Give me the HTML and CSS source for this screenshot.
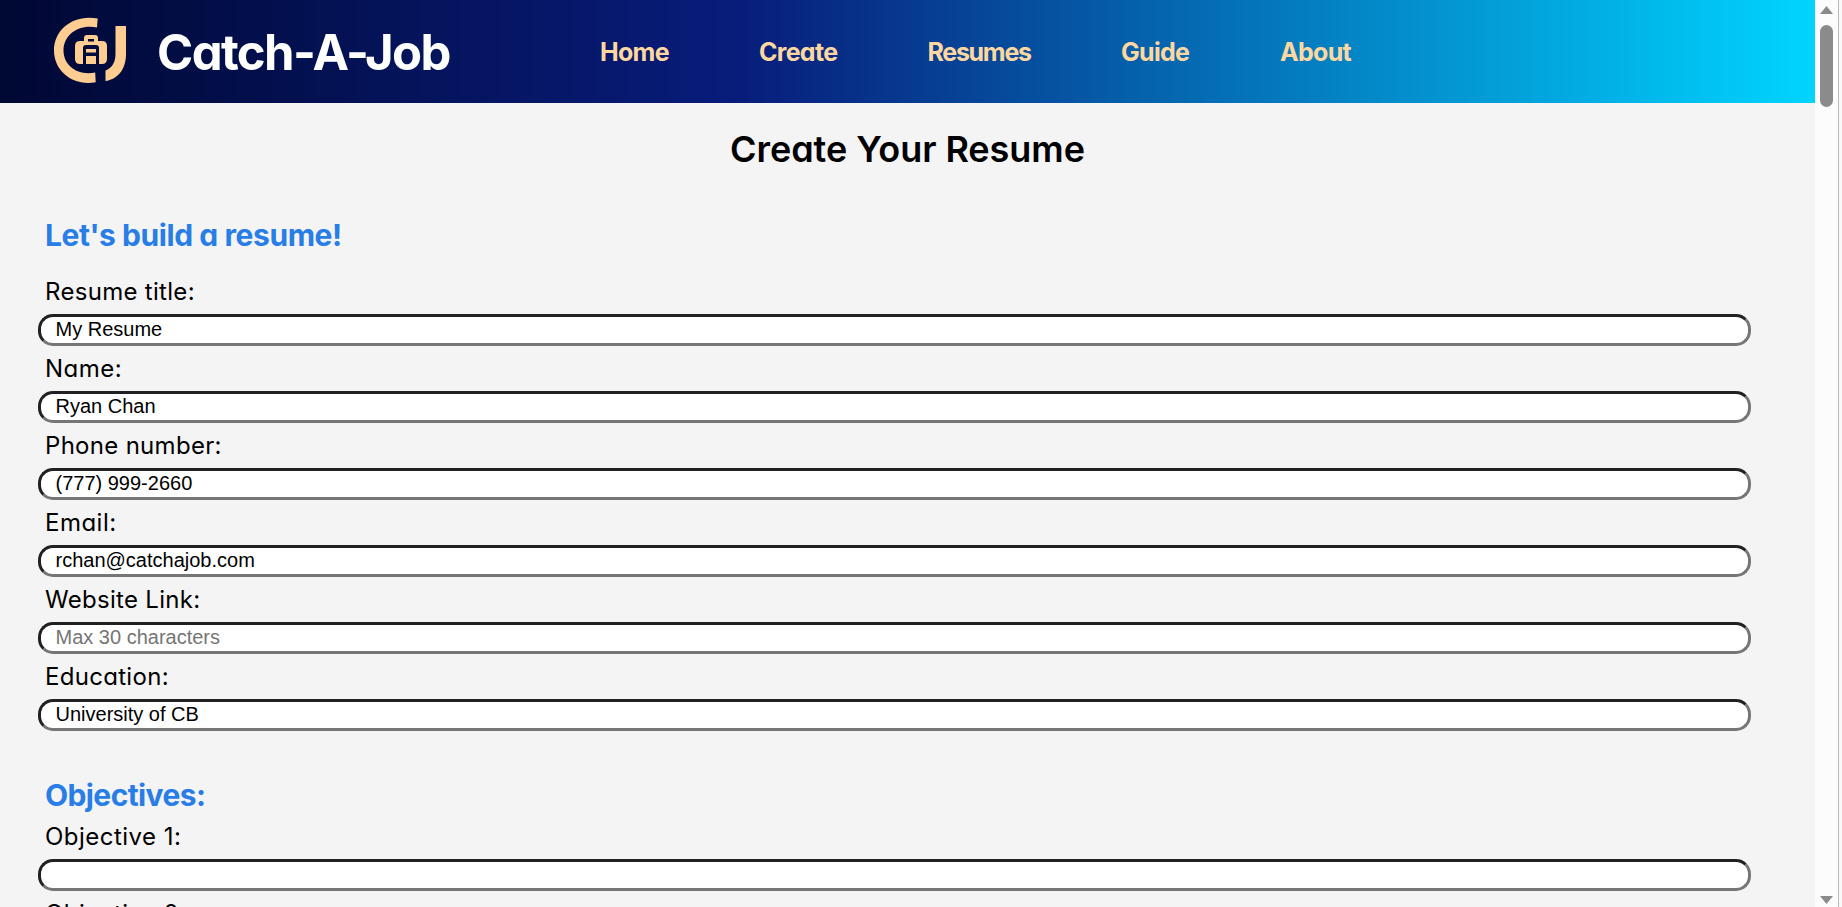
FILE: index.html
```html
<!DOCTYPE html>
<html lang="en">
<head>
<meta charset="utf-8">
<title>Catch-A-Job</title>
<link rel="stylesheet" href="styles.css">
</head>
<body>
<div class="page">
<header class="navbar">
<svg class="logo" viewBox="0 0 72 68" width="72" height="68"><g fill="#ffcc92"><path d="M43.700 1.600C20-3 0 12 0 33.500C0 55 20 69.500 41.700 65.200L41.200 55.500C24 59 9.500 49 9.500 33.500C9.500 18 24 7 43 10.500Z"/><path d="M61.500 9H72V37C72 53 63 62.500 51.500 64V53.500C58 51 61.500 45.500 61.500 37Z"/><path fill-rule="evenodd" d="M33 18H41Q44 18 44 21V24H48Q53 24 53 29V42Q53 47 48 47H45V31Q45 28 42 28H32Q29 28 29 31V47H26Q21 47 21 42V29Q21 24 26 24H30V21Q30 18 33 18ZM34 22V24.500H40V22Z"/><path d="M32 32H42V35.500H32ZM32 39H42V47H32Z"/></g></svg>
<span class="brand">Catch-A-Job</span>
<nav class="links"><a>Home</a><a>Create</a><a class="tight">Resumes</a><a>Guide</a><a>About</a></nav>
</header>
<main>
<h1>Create Your Resume</h1>
<h2>Let's build a resume!</h2>
<label>Resume title:</label><input value="My Resume">
<label class="wide">Name:</label><input value="Ryan Chan">
<label>Phone number:</label><input value="(777) 999-2660">
<label class="wide">Email:</label><input value="rchan@catchajob.com">
<label>Website Link:</label><input placeholder="Max 30 characters">
<label>Education:</label><input value="University of CB">
<h2 class="section">Objectives:</h2>
<label class="wide">Objective 1:</label><input>
<label class="wide">Objective 2:</label><input>
</main>
</div>
<aside class="scrollbar">
<svg width="13" height="8" viewBox="0 0 13 8"><path fill="#8b8b8b" d="M6.500 0L13 8H0Z"/></svg>
<div class="thumb"></div>
<svg class="down" width="13" height="8" viewBox="0 0 13 8"><path fill="#8b8b8b" d="M0 0H13L6.500 8Z"/></svg>
</aside>
<div class="edge"></div>
</body>
</html>
```
FILE: styles.css
```css
* { box-sizing: border-box; }
body {
  margin: 0;
  height: 907px;
  overflow: hidden;
  display: flex;
  background: #f4f4f4;
  font-family: Inter, "Liberation Sans", sans-serif;
  font-feature-settings: "cv11";
}
.page { width: 1815px; height: 907px; overflow: hidden; flex: none; }
.navbar {
  height: 103px;
  display: flex;
  align-items: center;
  padding-left: 54px;
  background: linear-gradient(90deg, #000833 0%, #081c7a 40.5%, #00d4ff 100%);
}
.logo { flex: none; margin-bottom: 2px; }
.brand {
  width: 442px;
  margin-left: 31px;
  padding-top: 2px;
  font-size: 49px;
  font-weight: 650;
  letter-spacing: -1.6px;
  color: #fff;
  flex: none;
}
.links {
  display: grid;
  grid-template-columns: 159px 168.500px 193.500px 159px 90px;
  padding-left: 1px;
  color: #ffd7a0;
  font-size: 25px;
  font-weight: 650;
  letter-spacing: -0.7px;
}
.links .tight { letter-spacing: -1.3px; }
h1 {
  margin: 0;
  line-height: 93px;
  text-align: center;
  font-size: 36px;
  font-weight: 600;
  letter-spacing: -0.05px;
}
h2 {
  margin: 0;
  padding: 6px 0 0 45px;
  line-height: 67px;
  font-size: 30px;
  font-weight: 650;
  letter-spacing: -0.43px;
  color: #287ee6;
}
.section { padding-top: 46px; line-height: 37px; letter-spacing: -0.6px; }
label {
  display: block;
  padding: 6px 0 6px 45px;
  line-height: 33px;
  font-size: 24px;
  letter-spacing: 0.3px;
}
.wide { letter-spacing: 0.48px; }
input {
  display: block;
  width: 1713px;
  height: 32px;
  margin: 0 0 0 38px;
  padding: 0 14.5px 2px;
  border: 3px solid #767676;
  border-top-color: #212121;
  border-left-color: #212121;
  border-radius: 15px;
  background: #fff;
  font: 20px "Liberation Sans", sans-serif;
}
.scrollbar {
  width: 23px;
  flex: none;
  display: flex;
  flex-direction: column;
  padding: 6px 5px 3px;
  background: #fcfcfc;
}
.thumb {
  width: 13px;
  height: 82px;
  margin-top: 11px;
  border-radius: 7px;
  background: #8b8b8b;
}
.down { margin-top: auto; }
.edge { flex: 1; border-left: 1px solid #bbb; background: #f9f9f9; }
```
